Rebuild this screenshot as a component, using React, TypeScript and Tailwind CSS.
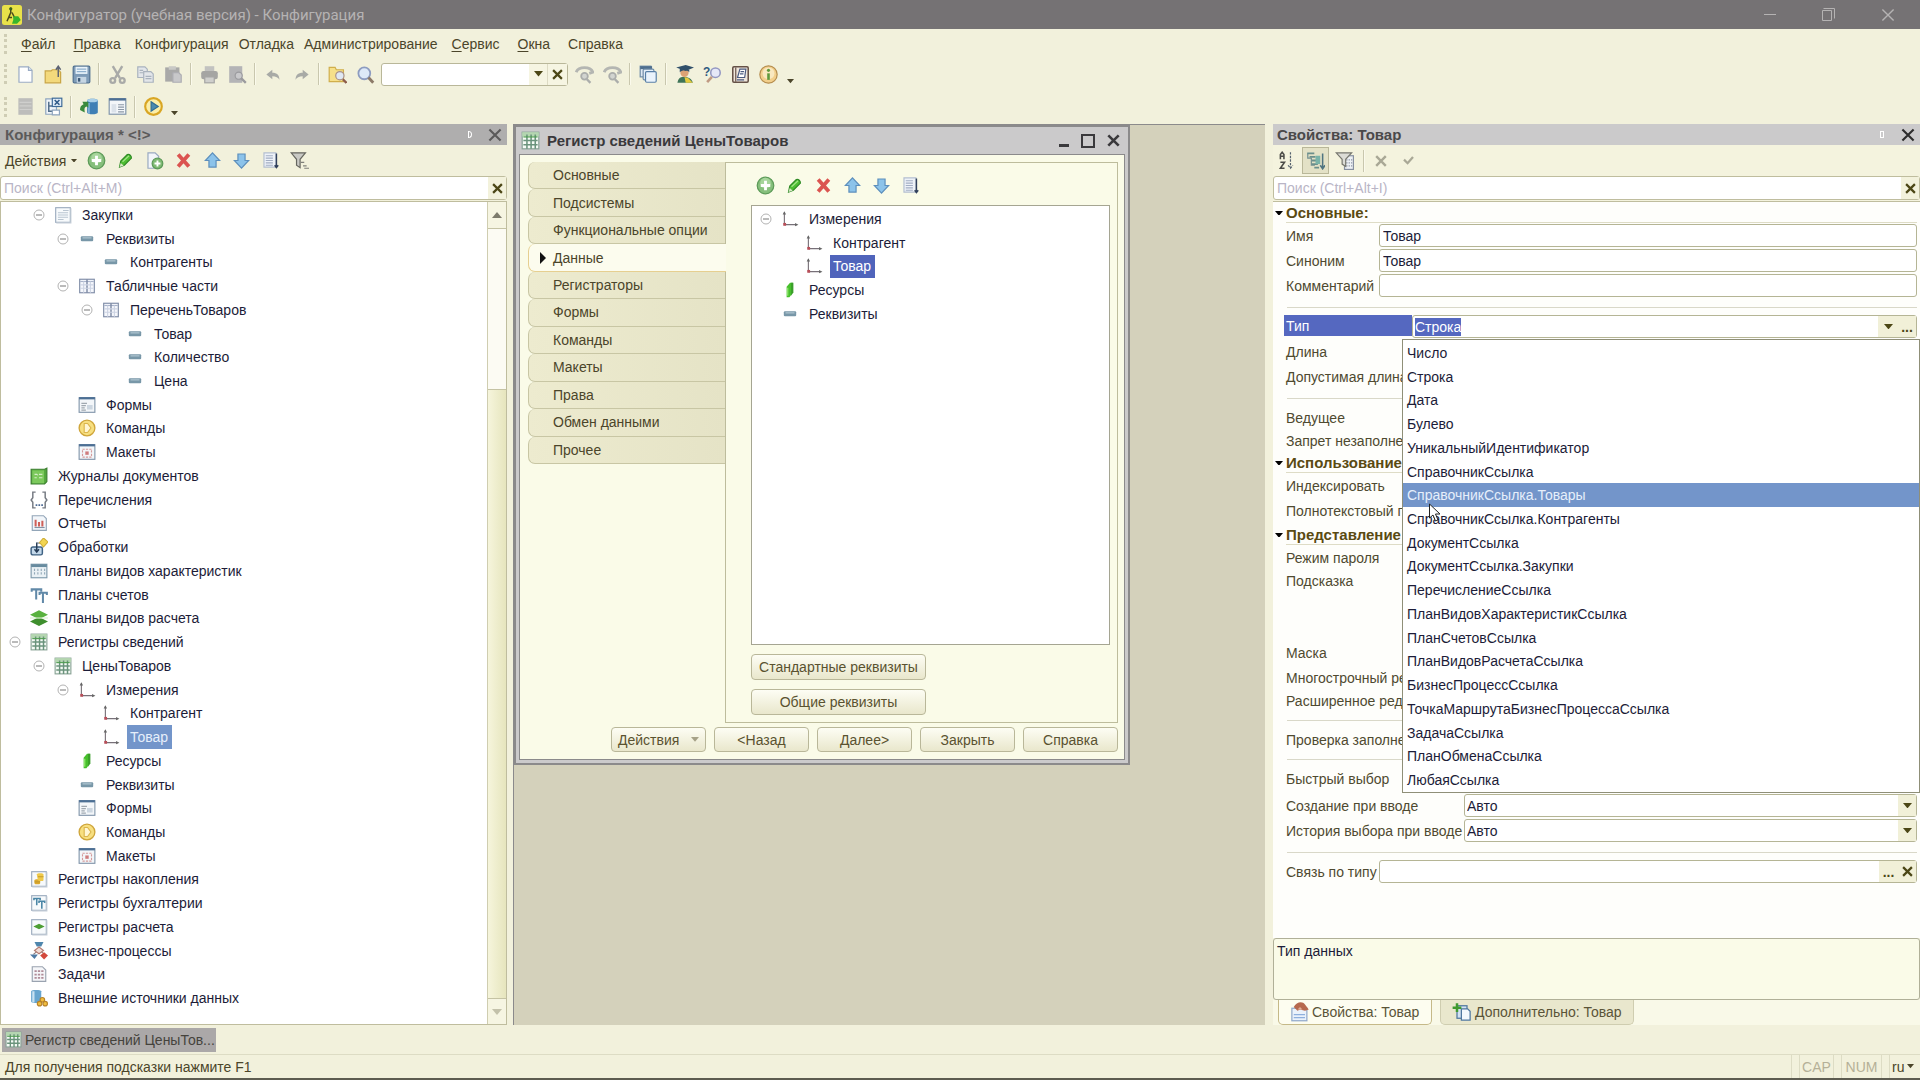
import { useState, type ReactNode } from 'react';
import clsx from 'clsx';

type IconName = keyof typeof ICONS;

interface TreeItem {
  level: number;
  icon: IconName;
  label: string;
  open?: boolean;
  selected?: boolean;
}

const sheet = (
  <>
    <rect x="1.5" y="1.5" width="13" height="13" fill="#f7fafc" stroke="#9aaabd" />
    <path d="M2 15h13V2" fill="none" stroke="#c3ccd6" />
  </>
);

const windowFrame = (
  <>
    <rect x="1" y="1.5" width="14" height="13" fill="#f3f6f9" stroke="#8296ab" />
    <rect x="1" y="1" width="14" height="2" fill="#4c6f94" />
  </>
);

const ICONS = {
  logo: (
    <>
      <rect x="0" y="0" width="16" height="16" rx="2" fill="#e9e14a" />
      <path d="M7 2v4L4 13M8 6l4 8M5 10h3" fill="none" stroke="#4c4a1c" strokeWidth="1.2" />
      <circle cx="7" cy="3" r="1.3" fill="#39601e" />
      <path d="M9 9h4l2 3-3 3H8l1-3z" fill="#38b52c" />
    </>
  ),
  newFile: (
    <>
      <path d="M2.5 1.5h8l3 3v10h-11z" fill="#fff" stroke="#9aabc4" />
      <path d="M10.5 1.5v3h3" fill="#dfe8f3" stroke="#9aabc4" />
    </>
  ),
  openFile: (
    <>
      <path d="M1 5h5l1-1h5l2 2v9H1z" fill="#f3d97c" stroke="#c9a545" />
      <path d="M12 10V1.5M10 4l2-3 2 3" fill="none" stroke="#5c6273" strokeWidth="1.2" />
    </>
  ),
  save: (
    <>
      <rect x="1" y="1" width="14" height="14" rx="1" fill="#7f9cb8" stroke="#4f6f90" />
      <rect x="3" y="1.5" width="10" height="6" fill="#eaf3fa" />
      <path d="M4 3.5h8M4 5.5h8" stroke="#8fb0cd" />
      <rect x="4" y="10" width="8" height="5" fill="#c5d5e3" />
      <rect x="5" y="11" width="2" height="3" fill="#3d5a78" />
    </>
  ),
  cut: (
    <g fill="none" stroke="#a9aaa8" strokeWidth="2">
      <path d="M4 1l6 10M12 1L6 11" />
      <circle cx="4" cy="13" r="2" />
      <circle cx="12" cy="13" r="2" />
    </g>
  ),
  copy: (
    <g fill="#e3e6ea" stroke="#a9b2bd">
      <path d="M1.5 1.5h6l2 2v7h-8z" />
      <path d="M6.5 5.5h6l2 2v7h-8z" />
      <path d="M8 9.5h5M8 11.5h5M3 4.5h3M3 6.5h3" />
    </g>
  ),
  paste: (
    <>
      <rect x="1" y="2" width="12" height="12" fill="#a9a9a8" />
      <rect x="4" y="1" width="6" height="3" fill="#c9c9c6" />
      <path d="M7.5 6.5h5l2 2v6h-7z" fill="#c8c8ca" stroke="#adadb2" />
    </>
  ),
  print: (
    <>
      <rect x="4" y="1" width="8" height="5" fill="#c2c2c0" />
      <rect x="1" y="5" width="14" height="7" rx="2" fill="#a5a5a3" />
      <rect x="4" y="10" width="8" height="5" fill="#cfcfcc" stroke="#a5a5a3" />
    </>
  ),
  preview: (
    <>
      <rect x="1" y="1" width="11" height="14" fill="#b4b4b6" />
      <circle cx="9" cy="9" r="3" fill="#c9c9cb" stroke="#9b9b9e" />
      <path d="M11 11l4 4" stroke="#9b9b9e" strokeWidth="2" />
    </>
  ),
  undo: <path d="M2 8l5-4v2.500c4 0 6 2 6 6-1-2-3-3-6-3V12z" fill="#a8aaa6" />,
  redo: <path d="M14 8L9 4v2.500c-4 0-6 2-6 6 1-2 3-3 6-3V12z" fill="#a8aaa6" />,
  findFolder: (
    <>
      <path d="M1 2h5l1 2h6v10H1z" fill="#f6e08a" stroke="#d0ae4c" />
      <circle cx="10" cy="9" r="3.5" fill="#dfe8f3" stroke="#a8928c" />
      <path d="M12.500 12l3 3" stroke="#8d5d4c" strokeWidth="2" />
    </>
  ),
  zoom: (
    <>
      <circle cx="7" cy="7" r="5" fill="#dde9f8" stroke="#8d9cc0" strokeWidth="1.5" />
      <path d="M10.500 10.500l4 4.500" stroke="#8c7a68" strokeWidth="2.4" />
    </>
  ),
  searchArc: (
    <>
      <path d="M1 6c2-5 12-5 14 0l-3 1" fill="none" stroke="#b4b6b2" strokeWidth="2.4" />
      <circle cx="8" cy="9.5" r="2.8" fill="#d2d4d0" stroke="#abadab" strokeWidth="1.5" />
      <path d="M10 12l3 3" stroke="#abadab" strokeWidth="2" />
    </>
  ),
  windows: (
    <>
      <rect x="1" y="1" width="9" height="9" fill="#dfe9f4" stroke="#6d8aa6" />
      <rect x="1" y="1" width="10" height="2.5" fill="#4e6e8e" />
      <rect x="3.5" y="3.5" width="9" height="9" rx="1" fill="#e6f0fa" stroke="#6d8aa6" />
      <rect x="5.5" y="5.5" width="9" height="9" rx="1" fill="#eaf3fc" stroke="#587fa6" />
    </>
  ),
  graduate: (
    <>
      <circle cx="8" cy="6.5" r="3.5" fill="#dca275" />
      <path d="M1 2l8-2 7 2-7 3z" fill="#31506a" />
      <path d="M4 3v3c3-2 6-2 8 0V4z" fill="#31506a" />
      <path d="M2 15c1-5 3-5 6-5s6 1 7 5z" fill="#3f7458" />
      <path d="M8 10l3 1 4 4H9z" fill="#e5cb3e" />
    </>
  ),
  helpSearch: (
    <>
      <text x="0" y="9" fontSize="10" fontWeight="bold" fill="#2f5a80" fontFamily="Liberation Sans">?</text>
      <circle cx="10.5" cy="6.5" r="4" fill="#e6e8f8" stroke="#9397c2" strokeWidth="1.3" />
      <path d="M7.500 10l-4 4.500" stroke="#c09a83" strokeWidth="2.2" />
    </>
  ),
  book: (
    <>
      <rect x="1.5" y="1.5" width="13" height="13" rx="1" fill="#efe6dc" stroke="#665248" strokeWidth="1.3" />
      <path d="M4 2v12" stroke="#665248" />
      <path d="M7.500 3.500h5l-1 7h-6z" fill="#fff" stroke="#4c5b80" />
      <path d="M8 5.500h3M7.500 7.500h3M5 12.500h6" stroke="#4c5b80" />
    </>
  ),
  info: (
    <>
      <circle cx="8" cy="8" r="7.3" fill="#f2cf8c" stroke="#b58d4e" />
      <circle cx="8" cy="7" r="5" fill="#f9e8c0" />
      <circle cx="8" cy="4.5" r="1.3" fill="#5f9a3c" />
      <path d="M8 7v5.500" stroke="#5f9a3c" strokeWidth="2.2" />
    </>
  ),
  listGray: (
    <>
      <rect x="2" y="1" width="12" height="14" fill="#bdbdbb" />
      <path d="M3 4.500h10M3 7.500h10M3 10.500h10" stroke="#cfcfcd" />
    </>
  ),
  treeWindow: (
    <>
      <path d="M1.500 1.500h9v13h-9z" fill="#f0f5fa" stroke="#8fa5bd" />
      <path d="M4 4v8h4M4 7.500h4" fill="none" stroke="#54708c" strokeWidth="1.3" />
      <rect x="7" y="1" width="8" height="7" fill="#e2edf8" stroke="#3f6b98" />
      <path d="M9 2.500l4 4M13 2.500l-4 4" stroke="#2f5a88" strokeWidth="1.3" />
      <path d="M7 11h6v4H7z" fill="#fff" stroke="#8fa5bd" />
    </>
  ),
  database: (
    <>
      <path d="M6 3c0-2 9-2 9 0v10c0 2-9 2-9 0z" fill="#3f7fb5" />
      <ellipse cx="10.5" cy="3" rx="4.5" ry="1.5" fill="#a9cfe8" />
      <path d="M7.500 5v9" stroke="#7db1d6" strokeWidth="1.5" />
      <path d="M0 11c0-3 1-4 3-5L2 4h5v5L5.500 8C3 9 4 11 4 13z" fill="#3b8a3c" />
    </>
  ),
  formWindow: (
    <>
      {windowFrame}
      <path d="M3 6h4v7H3z" fill="#dbe2ea" />
      <path d="M8.500 6.500h5M8.500 8.500h5M8.500 10.500h5M8.500 12.500h5" stroke="#8c98a6" />
    </>
  ),
  run: (
    <>
      <circle cx="8" cy="8" r="7" fill="#fbeea8" stroke="#d9a624" strokeWidth="1.8" />
      <path d="M6 4l6 4-6 4z" fill="#4a8ab0" stroke="#2f6c94" />
    </>
  ),
  add: (
    <>
      <circle cx="8" cy="8" r="7" fill="#86bf7c" stroke="#5c9a58" />
      <circle cx="8" cy="6" r="4.5" fill="#a6d59b" />
      <path d="M8 4v8M4 8h8" stroke="#fff" strokeWidth="2.4" />
    </>
  ),
  edit: (
    <>
      <path d="M3 13.500l1-5L9.500 3c2-.5 3.500 1 3.500 3l-6 6z" fill="#4ebd32" stroke="#2f8a25" />
      <path d="M3 13.500l1-3.500 2.500 2.500z" fill="#d9e8c8" />
      <path d="M5.500 9L11 4" stroke="#a2e688" />
    </>
  ),
  addCopy: (
    <>
      <path d="M2.500 1.500h6l3 3v10h-9z" fill="#f2f5fa" stroke="#99a9c0" />
      <circle cx="10.5" cy="10.5" r="4.5" fill="#7fba74" stroke="#5c9a58" />
      <path d="M10.500 8v5M8 10.500h5" stroke="#fff" strokeWidth="1.6" />
    </>
  ),
  remove: <path d="M3.500 3l9 10M12.500 3l-9 10" stroke="#db5450" strokeWidth="3.2" />,
  up: <path d="M8 1.500l6 6.500H11v5.500H5V8H2z" fill="#8cc3ea" stroke="#5d8fbc" />,
  down: <path d="M8 14.500L2 8h3V2.500h6V8h3z" fill="#8cc3ea" stroke="#5d8fbc" />,
  sort: (
    <>
      <path d="M2.500 1.500h10v12h-10z" fill="#eef2f8" stroke="#b4bfd0" />
      <path d="M4 4h6M4 6h6M4 8h6M4 10h6M4 12h6" stroke="#a3aec4" />
      <path d="M13 2v12M11.500 12l1.500 2 1.500-2" fill="none" stroke="#31405c" strokeWidth="1.2" />
    </>
  ),
  filter: (
    <>
      <path d="M1 1.500h12L8.500 7v7l-3-2V7z" fill="#c9c9c4" stroke="#66665f" />
      <path d="M9 9.500h3M11 12.500h3M12 14.500h4" stroke="#80807a" />
    </>
  ),
  document: (
    <>
      {sheet}
      <path d="M8 4h5M3.500 6h9M3.500 8h9M3.500 10h9M3.500 12h5" stroke="#b9c5d1" />
    </>
  ),
  attribute: (
    <>
      <rect x="2.5" y="5.5" width="11" height="4.5" rx="1" fill="#7897a8" />
      <path d="M4 7h8" stroke="#b5cad4" />
    </>
  ),
  tabular: (
    <>
      <rect x="1.5" y="2" width="13" height="12" fill="#f5f7fc" stroke="#7e8ba6" />
      <path d="M2 4h12" stroke="#a9b3ca" />
      <path d="M8 2v12" stroke="#7e8ba6" strokeWidth="1.3" />
      <path d="M2 7h12M2 10h12M5 4v10M11 4v10" stroke="#cdd4e3" />
    </>
  ),
  form: (
    <>
      {windowFrame}
      <path d="M3 6.500h5M3 8.500h4M3 10.500h3M3 12.500h4" stroke="#a0a8b0" />
      <rect x="8" y="8" width="5" height="4" fill="#ccd6e0" />
    </>
  ),
  command: (
    <>
      <circle cx="8" cy="8" r="7" fill="#f7df80" stroke="#cfa53a" strokeWidth="1.2" />
      <path d="M5.500 4h3l3 4-3 4h-3z" fill="#fff6d4" stroke="#dbb64e" />
    </>
  ),
  template: (
    <>
      {windowFrame}
      <path d="M4 5.500h8v7H4z" fill="none" stroke="#d59a9a" strokeDasharray="2 1" />
      <rect x="6.5" y="7.5" width="3" height="3" fill="#cf7c7d" />
    </>
  ),
  journal: (
    <>
      <path d="M1 2h12l2-1v12l-2 2H1z" fill="#53a83c" stroke="#3c7f30" />
      <rect x="2" y="3" width="10.5" height="11.5" fill="#7cc95c" />
      <path d="M4 6.500h2l1 1M8 6.500h3M4 9.500h2M8 9.500h3" stroke="#d5f0c5" />
    </>
  ),
  enumeration: (
    <>
      <path d="M5 1H2.500v5L1 8l1.500 2v5H5M11 1h2.500v5L15 8l-1.500 2v5H11" fill="none" stroke="#757a82" strokeWidth="1.3" />
      <path d="M5 12.500h1.500M7.500 12.500h1.500M10 12.500h1.500" stroke="#4c6a94" strokeWidth="1.5" />
    </>
  ),
  report: (
    <>
      <path d="M2 1.500h10l2.500 2.500v10.500H2z" fill="#f2f6fa" stroke="#92a5b8" />
      <path d="M5 11V5M8 11V7M11 11V6" stroke="#cf5f58" strokeWidth="1.8" />
      <path d="M4 12h9" stroke="#8291a3" />
    </>
  ),
  processing: (
    <>
      <rect x="1" y="8" width="10" height="7" rx="1.5" fill="#c3d8ea" stroke="#3f6283" strokeWidth="1.3" />
      <path d="M6 4v8M4 10l2 2.500L8 10" fill="none" stroke="#263d58" strokeWidth="1.3" />
      <path d="M6 4.500h3" stroke="#6c7683" />
      <path d="M12 0l4 3.500L12 8 8.500 4z" fill="#f2d552" stroke="#cfae36" />
    </>
  ),
  characteristics: (
    <>
      <rect x="1" y="2" width="14" height="12" fill="#eaf1f5" stroke="#7e9aac" />
      <rect x="1" y="2" width="14" height="2.5" fill="#678b9f" />
      <path d="M4 6v6M7 6v6M10 6v6M13 6v6" stroke="#93a9b8" strokeDasharray="2 1" />
    </>
  ),
  accounts: (
    <g fill="none" stroke="#6189a8" strokeWidth="1.8">
      <path d="M1.500 5V3h8.500v2M5.500 3v9" />
      <path d="M8.500 8V6h6.500v2M11.500 6v9" />
    </g>
  ),
  calculation: (
    <>
      <path d="M8 7l8 4-8 4-8-4z" fill="#3f8f2e" />
      <path d="M8 1l8 4-8 4-8-4z" fill="#59b23f" />
      <path d="M0 8h16" stroke="#d9efd0" />
    </>
  ),
  infoRegister: (
    <>
      <rect x="1" y="1" width="14" height="14" fill="#f5faf5" stroke="#88a295" />
      <rect x="1" y="1" width="14" height="3.5" fill="#b4d6b0" />
      <path d="M2 8h12M2 11.500h12M5 3v12M8.500 3v12M12 3v12" stroke="#6a937c" strokeWidth="1.3" />
      <path d="M2 5h12" stroke="#4f9c50" />
    </>
  ),
  dimension: (
    <>
      <path d="M3 2v11M3 13h11" stroke="#777078" fill="none" />
      <path d="M1.500 4L3 1l1.500 3zM12.500 11.500L15.500 13l-3 1.500z" fill="#666" />
      <rect x="2" y="11.5" width="2.5" height="2.5" fill="#b84e58" />
    </>
  ),
  resource: (
    <>
      <path d="M5 5l3-3.500h2.500v9l-3 4H5z" fill="#47bf2c" />
      <path d="M9 1.500h2v8.500l-2 3z" fill="#3a9d2a" />
      <path d="M6 6v7" stroke="#9aec75" />
    </>
  ),
  accumulation: (
    <>
      {sheet}
      <path d="M4 9c0-1 5-1 5 0v3c0 1-5 1-5 0z" fill="#dca92e" />
      <path d="M6 4c0-1.500 6-1.500 6 0v5c0 1-4 1-5 0z" fill="#efc94a" />
      <path d="M7 6h5M4 10.500h5" stroke="#c39a2c" />
    </>
  ),
  accounting: (
    <>
      {sheet}
      <g fill="none" stroke="#4a86a6" strokeWidth="1.4">
        <path d="M3.500 5.500V4h5.500v1.500M6 4v6" />
        <path d="M8 8V6.500h5V8M10.500 6.500V13" />
      </g>
    </>
  ),
  calcRegister: (
    <>
      {sheet}
      <path d="M8 5l5 2.500L8 10 3 7.500z" fill="#4d9e34" />
    </>
  ),
  process: (
    <>
      <path d="M4 0h8l-2 4H6z" fill="#4f86ad" />
      <path d="M3 11l5-4 5 4" stroke="#8d7a78" fill="none" />
      <path d="M8 4.500l4 3-4 3-4-3z" fill="#f1ddd6" stroke="#b47d74" />
      <path d="M0 11h7l-3 4z" fill="#4f7ba5" />
      <path d="M12.500 9l3.500 3-3.500 3.500L9 12z" fill="#d3493c" />
    </>
  ),
  task: (
    <>
      <path d="M2 1.500h9l3 3v10H2z" fill="#f5f6f9" stroke="#9aa3b0" />
      <path d="M4 5.500h8M4 8.500h8M4 11.500h8" stroke="#b08c98" strokeWidth="1.5" strokeDasharray="2 1" />
    </>
  ),
  external: (
    <>
      <path d="M1 2c0-1.500 9-1.500 9 0v9c0 2-9 2-9 0z" fill="#67a5cf" />
      <path d="M3 2v10" stroke="#c9e2f2" strokeWidth="2" />
      <g fill="#f0bd3e" stroke="#b8832a">
        <circle cx="11" cy="9.5" r="2" />
        <circle cx="8.5" cy="13" r="2" />
        <circle cx="13.5" cy="13" r="2" />
      </g>
    </>
  ),
  sortAz: (
    <>
      <path d="M2 7V3l1.500-2L5 3v4M2 4.500h3M2 9.500h3.500L2 14.500h3.500" fill="none" stroke="#4c4c48" strokeWidth="1.3" />
      <path d="M10.500 1v13M8.500 12l2 2.500 2-2.500" fill="none" stroke="#55626e" strokeDasharray="2 1" />
    </>
  ),
  categories: (
    <>
      <path d="M1 2h6M3 5h5M5 8h5M5 11h5M7 14h4" stroke="#6b8f8b" strokeWidth="1.5" />
      <path d="M1.500 2v4h3v6h3" fill="none" stroke="#718f90" />
      <rect x="8" y="4" width="4" height="7" fill="#79b3a8" />
      <path d="M14 2v12M12 12l2 3 2-3" fill="none" stroke="#4f7480" strokeWidth="1.3" />
    </>
  ),
  filterList: (
    <>
      <rect x="8" y="4" width="7.5" height="11.5" fill="#eef1f5" stroke="#8790a0" />
      <path d="M9.500 7.500h5M9.500 10h5M9.500 12.500h5" stroke="#8a93a3" strokeDasharray="1 1" />
      <path d="M1 1.500h13L9 7v6l-3-2V7z" fill="#dcdcd6" stroke="#77776f" />
    </>
  ),
  properties: (
    <>
      <rect x="1.5" y="5" width="12" height="10" fill="#eaf2fb" stroke="#93aacb" />
      <path d="M3 10h9M3 12.500h9" stroke="#8eb0dd" />
      <path d="M3 4c2-4 7-5 9-2l3 4-3 1-4-1-2 1z" fill="#b6694f" />
      <path d="M6 6l2-2 2 2" fill="#e2ae94" />
    </>
  ),
  additional: (
    <>
      <rect x="4" y="3" width="8" height="10" fill="#d3e2f2" stroke="#4f779f" />
      <path d="M7.500 5.500h5l2 2v7h-7z" fill="#f3f8fd" stroke="#4f779f" />
      <path d="M4 1v7M.5 4.500h7" stroke="#3f9a30" strokeWidth="2" />
    </>
  ),
} satisfies Record<string, ReactNode>;

const TREE: TreeItem[] = [
  { level: 1, icon: 'document', label: 'Закупки', open: true },
  { level: 2, icon: 'attribute', label: 'Реквизиты', open: true },
  { level: 3, icon: 'attribute', label: 'Контрагенты' },
  { level: 2, icon: 'tabular', label: 'Табличные части', open: true },
  { level: 3, icon: 'tabular', label: 'ПереченьТоваров', open: true },
  { level: 4, icon: 'attribute', label: 'Товар' },
  { level: 4, icon: 'attribute', label: 'Количество' },
  { level: 4, icon: 'attribute', label: 'Цена' },
  { level: 2, icon: 'form', label: 'Формы' },
  { level: 2, icon: 'command', label: 'Команды' },
  { level: 2, icon: 'template', label: 'Макеты' },
  { level: 0, icon: 'journal', label: 'Журналы документов' },
  { level: 0, icon: 'enumeration', label: 'Перечисления' },
  { level: 0, icon: 'report', label: 'Отчеты' },
  { level: 0, icon: 'processing', label: 'Обработки' },
  { level: 0, icon: 'characteristics', label: 'Планы видов характеристик' },
  { level: 0, icon: 'accounts', label: 'Планы счетов' },
  { level: 0, icon: 'calculation', label: 'Планы видов расчета' },
  { level: 0, icon: 'infoRegister', label: 'Регистры сведений', open: true },
  { level: 1, icon: 'infoRegister', label: 'ЦеныТоваров', open: true },
  { level: 2, icon: 'dimension', label: 'Измерения', open: true },
  { level: 3, icon: 'dimension', label: 'Контрагент' },
  { level: 3, icon: 'dimension', label: 'Товар', selected: true },
  { level: 2, icon: 'resource', label: 'Ресурсы' },
  { level: 2, icon: 'attribute', label: 'Реквизиты' },
  { level: 2, icon: 'form', label: 'Формы' },
  { level: 2, icon: 'command', label: 'Команды' },
  { level: 2, icon: 'template', label: 'Макеты' },
  { level: 0, icon: 'accumulation', label: 'Регистры накопления' },
  { level: 0, icon: 'accounting', label: 'Регистры бухгалтерии' },
  { level: 0, icon: 'calcRegister', label: 'Регистры расчета' },
  { level: 0, icon: 'process', label: 'Бизнес-процессы' },
  { level: 0, icon: 'task', label: 'Задачи' },
  { level: 0, icon: 'external', label: 'Внешние источники данных' },
];

const REGISTER_TREE: TreeItem[] = [
  { level: 0, icon: 'dimension', label: 'Измерения', open: true },
  { level: 1, icon: 'dimension', label: 'Контрагент' },
  { level: 1, icon: 'dimension', label: 'Товар', selected: true },
  { level: 0, icon: 'resource', label: 'Ресурсы' },
  { level: 0, icon: 'attribute', label: 'Реквизиты' },
];

// [before, underlined letter, after]
const MENU = [
  ['', 'Ф', 'айл'],
  ['', 'П', 'равка'],
  ['Конфигурация', '', ''],
  ['Отладка', '', ''],
  ['Администрирование', '', ''],
  ['', 'С', 'ервис'],
  ['', 'О', 'кна'],
  ['Сп', 'р', 'авка'],
];

const TABS = [
  'Основные',
  'Подсистемы',
  'Функциональные опции',
  'Данные',
  'Регистраторы',
  'Формы',
  'Команды',
  'Макеты',
  'Права',
  'Обмен данными',
  'Прочее',
];

const TYPES = [
  'Число',
  'Строка',
  'Дата',
  'Булево',
  'УникальныйИдентификатор',
  'СправочникСсылка',
  'СправочникСсылка.Товары',
  'СправочникСсылка.Контрагенты',
  'ДокументСсылка',
  'ДокументСсылка.Закупки',
  'ПеречислениеСсылка',
  'ПланВидовХарактеристикСсылка',
  'ПланСчетовСсылка',
  'ПланВидовРасчетаСсылка',
  'БизнесПроцессСсылка',
  'ТочкаМаршрутаБизнесПроцессаСсылка',
  'ЗадачаСсылка',
  'ПланОбменаСсылка',
  'ЛюбаяСсылка',
];

const BTN = 'rounded-[4px] border border-[#b9b799] bg-linear-to-b from-[#fdfdf4] to-[#e9e7cc] text-[#5a5230]';
const FIELD = 'flex h-[23px] min-w-0 flex-1 rounded-[3px] border border-[#b5b595] bg-white text-[#1c1c38]';

function Icon({ name, className = 'size-[19px]' }: { name: IconName; className?: string }) {
  return (
    <svg viewBox="0 0 16 16" className={clsx('shrink-0', className)} aria-hidden="true">
      {ICONS[name]}
    </svg>
  );
}

function Caret({ className = 'w-[9px]' }: { className?: string }) {
  return (
    <svg viewBox="0 0 10 6" className={clsx('shrink-0', className)} aria-hidden="true">
      <path d="M0 0h10L5 6z" fill="currentColor" />
    </svg>
  );
}

function Cross({ className = 'size-[11px]', width = 2 }: { className?: string; width?: number }) {
  return (
    <svg viewBox="0 0 10 10" className={clsx('shrink-0', className)} aria-hidden="true">
      <path d="M1 1l8 8M9 1L1 9" stroke="currentColor" strokeWidth={width} />
    </svg>
  );
}

function Grip() {
  return <span className="mx-[4px] h-5 w-[3px] border-l-[3px] border-dotted border-[#cfcdb4]" />;
}

function Sep() {
  return <span className="mx-[3px] h-[22px] w-[2px] border-l border-[#c9c7ae] bg-[#fbfaec]" />;
}

function Tools({ names, wide }: { names: IconName[]; wide?: boolean }) {
  return (
    <>
      {names.map((name, i) => (
        <button key={i} aria-label={name} className={clsx('flex h-6 items-center justify-center', wide ? 'w-[29px]' : 'w-[28px]')}>
          <Icon name={name} />
        </button>
      ))}
    </>
  );
}

function TreeRow({ item, accent }: { item: TreeItem; accent: string }) {
  return (
    <li className="flex items-center whitespace-nowrap" style={{ paddingLeft: item.level * 24 + 6 }}>
      <span className="flex w-4 shrink-0 justify-center">
        {item.open && (
          <svg viewBox="0 0 12 12" className="size-[12px]" aria-hidden="true">
            <circle cx="6" cy="6" r="5" fill="#fff" stroke="#b3b3b3" />
            <path d="M3 6h6" stroke="#777" />
          </svg>
        )}
      </span>
      <span className="flex w-8 shrink-0 justify-center">
        <Icon name={item.icon} className="size-[18px]" />
      </span>
      <span className={clsx('flex h-full items-center pl-[3px] pr-[4px]', item.selected && accent)}>{item.label}</span>
    </li>
  );
}

function SearchBox({ placeholder }: { placeholder: string }) {
  return (
    <div className="flex h-6 rounded-[3px] border border-[#bfbd9e] bg-white">
      <input
        aria-label={placeholder}
        placeholder={placeholder}
        className="min-w-0 flex-1 px-[3px] outline-none placeholder:text-[#b9b5c6]"
      />
      <button aria-label="Очистить" className="flex w-[18px] items-center justify-center bg-[#f3f2dc] text-[#4c4716]">
        <Cross />
      </button>
    </div>
  );
}

function Section({ title }: { title: string }) {
  return (
    <div className="flex h-[22px] items-center">
      <span className="flex w-[11px] text-black">
        <Caret className="w-[8px]" />
      </span>
      <h3 className="flex h-5 flex-1 items-center border-b border-[#dedcc6] text-[15px] font-bold text-[#5a4a12]">{title}</h3>
    </div>
  );
}

function Divider() {
  return (
    <div className="flex h-4 items-center pl-[12px]">
      <span className="h-px flex-1 bg-[#d9d8c8]" />
    </div>
  );
}

function TextRow({ id, label, value = '', children }: { id: string; label: string; value?: string; children?: ReactNode }) {
  return (
    <div className="mb-[2px] flex h-[23px] items-center">
      <label htmlFor={id} className="w-[104px] shrink-0 pl-[11px] whitespace-nowrap">
        {label}
      </label>
      <div className={FIELD}>
        <input id={id} defaultValue={value} className="min-w-0 flex-1 px-[3px] outline-none" />
        {children}
      </div>
    </div>
  );
}

function SelectRow({ id, label }: { id: string; label: string }) {
  return (
    <div className="mb-[2px] flex h-[23px] items-center">
      <label htmlFor={id} className="w-[189px] shrink-0 pl-[11px] whitespace-nowrap">
        {label}
      </label>
      <div className={FIELD}>
        <select id={id} className="min-w-0 flex-1 appearance-none px-[2px] outline-none">
          <option>Авто</option>
        </select>
        <span className="flex w-[18px] items-center justify-center bg-[#f1f0d8] text-[#4c4716]">
          <Caret />
        </span>
      </div>
    </div>
  );
}

// the value controls of these rows lie under the opened type list
function LabelRow({ label, className = 'h-[23px]' }: { label: string; className?: string }) {
  return (
    <div className={className}>
      <p className="flex h-[23px] items-center pl-[11px] whitespace-nowrap">{label}</p>
    </div>
  );
}

function TypeList({ value, onSelect }: { value: string; onSelect: (type: string) => void }) {
  return (
    <div className="absolute top-[24px] right-[-3px] left-[127px] z-10 h-[454px] border border-[#8f8f78] bg-white text-[#1c1c38]">
      <ul role="listbox" aria-label="Тип" className="grid h-full auto-rows-fr pt-px">
        {TYPES.map((type) => (
          <li
            key={type}
            role="option"
            aria-selected={type === value}
            onClick={() => onSelect(type)}
            className={clsx('flex items-center pl-[4px]', type === value && 'bg-[#7395ca] text-[#e6effb]')}
          >
            {type}
          </li>
        ))}
      </ul>
      <svg viewBox="0 0 12 19" className="absolute top-[163px] left-[26px] h-[19px] w-[12px]" aria-hidden="true">
        <path d="M.5 1v14l3.500-3 2.500 6 2.500-1-2.500-6H11z" fill="#fff" stroke="#222" />
      </svg>
    </div>
  );
}

function ConfigurationPanel() {
  return (
    <aside className="flex w-[507px] shrink-0 flex-col">
      <header className="flex h-[21px] items-center bg-[#afaeae] pl-[5px] font-bold text-[#5b5a5a]">
        <h2 className="flex-1 text-[15px]">Конфигурация * &lt;!&gt;</h2>
        <span className="mr-[16px] h-[7px] w-[4px] rounded-r-sm border border-white" />
        <button aria-label="Закрыть панель" className="mr-[5px]">
          <Cross className="size-[14px]" width={1.5} />
        </button>
      </header>
      <div className="flex h-[31px] items-center pl-[5px]">
        <button className="flex w-[77px] items-center gap-[5px]">
          Действия
          <Caret className="w-[6px]" />
        </button>
        <Tools wide names={['add', 'edit', 'addCopy', 'remove', 'up', 'down', 'sort', 'filter']} />
      </div>
      <SearchBox placeholder="Поиск (Ctrl+Alt+M)" />
      <div className="mt-px flex min-h-0 flex-1 border border-[#bfbd9e] bg-white">
        <ul className="grid flex-1 auto-rows-fr pt-px pb-[14px] text-[#1c1c38]">
          {TREE.map((item, i) => (
            <TreeRow key={i} item={item} accent="bg-[#7395ca] text-[#e6effb]" />
          ))}
        </ul>
        <div className="flex w-[19px] flex-col border-l border-[#cfcdb0] bg-linear-to-r from-[#f6f5dc] to-[#e6e5bd]">
          <button aria-label="Вверх" className="flex h-[27px] items-center justify-center border-b border-[#c5c3a4] bg-[#f6f5e2] text-[#7d7b6c]">
            <Caret className="w-[10px] rotate-180" />
          </button>
          <div className="h-[161px] border-b border-[#c5c3a4] bg-[#fcfbf3]" />
          <div className="flex-1" />
          <button aria-label="Вниз" className="flex h-[26px] items-center justify-center border-t border-[#c5c3a4] bg-[#f6f5e2] text-[#c3c1aa]">
            <Caret className="w-[10px]" />
          </button>
        </div>
      </div>
    </aside>
  );
}

function RegisterWindow() {
  const [tab, setTab] = useState('Данные');
  return (
    <section className="flex h-[640px] w-[616px] flex-col border-2 border-[#8b8a8b] bg-[#cbcacb] px-[3px] pb-[3px]">
      <header className="flex h-[27px] items-center gap-[7px] pr-[5px] pl-[2px] text-[#3a393c]">
        <Icon name="infoRegister" />
        <h2 className="flex-1 text-[15px] font-bold">Регистр сведений ЦеныТоваров</h2>
        <button aria-label="Свернуть" className="mt-[10px] h-[3px] w-[10px] bg-[#3a393c]" />
        <button aria-label="Развернуть" className="ml-[5px] size-[14px] border-2 border-[#3a393c]" />
        <button aria-label="Закрыть" className="ml-[5px]">
          <Cross className="size-[13px]" />
        </button>
      </header>
      <div className="flex min-h-0 flex-1 flex-col border border-[#8b8a8b] bg-[#fafbe8] pt-[7px] pr-[6px] pb-[7px] pl-[8px]">
        <div className="flex min-h-0 flex-1">
          <div role="tablist" className="grid h-[302px] w-[198px] shrink-0 auto-rows-fr text-[#4b452a]">
            {TABS.map((name) => (
              <button
                key={name}
                role="tab"
                aria-selected={name === tab}
                onClick={() => setTab(name)}
                className={clsx(
                  'relative z-10 flex items-center rounded-l-[7px] border-b border-l pl-[8px]',
                  name === tab ? 'border-[#e6cf90] bg-[#fcfcee]' : 'mr-px border-[#c8c6a4] bg-linear-to-r from-[#edebcf] to-[#e5e3c6]',
                )}
              >
                <span className="flex w-4 pl-[3px]">
                  {name === tab && (
                    <svg viewBox="0 0 6 12" className="h-[12px] w-[6px]" aria-hidden="true">
                      <path d="M0 0l6 6-6 6z" fill="#111" />
                    </svg>
                  )}
                </span>
                {name}
              </button>
            ))}
          </div>
          <div className="-ml-px flex min-w-0 flex-1 flex-col border border-[#bdbc9c] pt-[8px] pr-[7px] pb-[7px] pl-[25px]">
            <div className="flex h-[28px] items-center">
              <Tools wide names={['add', 'edit', 'remove', 'up', 'down', 'sort']} />
            </div>
            <div className="mt-[6px] min-h-0 flex-1 border border-[#a5a592] bg-white text-[#1c1c38]">
              <ul className="grid h-[120px] auto-rows-fr pt-px">
                {REGISTER_TREE.map((item) => (
                  <TreeRow key={item.label} item={item} accent="bg-[#5064bb] text-white" />
                ))}
              </ul>
            </div>
            <div className="mt-[9px] flex w-[175px] flex-col gap-[9px]">
              <button className={clsx(BTN, 'h-[26px]')}>Стандартные реквизиты</button>
              <button className={clsx(BTN, 'h-[26px]')}>Общие реквизиты</button>
            </div>
          </div>
        </div>
        <footer className="mt-[4px] flex justify-end gap-[8px]">
          <button className={clsx(BTN, 'flex h-[25px] w-[95px] items-center justify-between px-[6px]')}>
            Действия
            <Caret className="w-[8px] opacity-50" />
          </button>
          {['<Назад', 'Далее>', 'Закрыть', 'Справка'].map((label) => (
            <button key={label} className={clsx(BTN, 'h-[25px] w-[95px]')}>
              {label}
            </button>
          ))}
        </footer>
      </div>
    </section>
  );
}

function PropertiesPanel() {
  const [type, setType] = useState('СправочникСсылка.Товары');
  return (
    <aside className="flex w-[647px] shrink-0 flex-col bg-[#f4f3de]">
      <header className="flex h-[21px] items-center bg-[#cbcacb] pl-[4px] font-bold text-[#4a494a]">
        <h2 className="flex-1 text-[15px]">Свойства: Товар</h2>
        <span className="mr-[17px] h-[7px] w-[4px] border border-white" />
        <button aria-label="Закрыть панель" className="mr-[5px] text-[#2d2d2d]">
          <Cross className="size-[14px]" width={1.5} />
        </button>
      </header>
      <div className="flex h-[31px] items-center text-[#a9a896]">
        <button aria-label="По алфавиту" className="flex w-[29px] justify-center">
          <Icon name="sortAz" />
        </button>
        <button aria-label="По категориям" className="flex size-[27px] items-center justify-center border border-[#b9b799] bg-[#e3e1c6]">
          <Icon name="categories" />
        </button>
        <button aria-label="Отбор" className="flex w-[31px] justify-center">
          <Icon name="filterList" />
        </button>
        <Sep />
        <button aria-label="Отменить" className="ml-[4px] flex w-[18px] justify-center">
          <Cross className="size-[12px]" />
        </button>
        <button aria-label="Применить" className="ml-[13px]">
          <svg viewBox="0 0 12 10" className="h-[9px] w-[11px]" aria-hidden="true">
            <path d="M1 4l4 4 6-7" fill="none" stroke="currentColor" strokeWidth="2.5" />
          </svg>
        </button>
      </div>
      <SearchBox placeholder="Поиск (Ctrl+Alt+I)" />
      <div className="mt-px min-h-0 flex-1 border-t border-[#bfbd9e] bg-[#fefefb] pr-[3px] pl-[2px] text-[#4f4a30]">
        <Section title="Основные:" />
        <TextRow id="name" label="Имя" value="Товар" />
        <TextRow id="synonym" label="Синоним" value="Товар" />
        <TextRow id="comment" label="Комментарий" />
        <Divider />
        <div className="relative mb-[2px] flex h-[23px]">
          <label htmlFor="type" className="ml-[9px] flex h-[21px] w-[128px] items-center bg-[#5568c0] pl-[2px] text-white">
            Тип
          </label>
          <div className={clsx(FIELD, 'items-center')}>
            <div className="flex-1">
              <input id="type" defaultValue="Строка" className="ml-[2px] block h-[18px] w-[46px] bg-[#5568c0] text-white outline-none" />
            </div>
            <button aria-label="Открыть список" className="flex h-full w-[20px] items-center justify-center bg-[#f1f0d8] text-[#4c4716]">
              <Caret />
            </button>
            <button aria-label="Выбрать" className="h-full w-[18px] bg-[#f1f0d8] font-bold text-[#4c4716]">...</button>
          </div>
          <TypeList value={type} onSelect={setType} />
        </div>
        <LabelRow label="Длина" className="h-[25px]" />
        <LabelRow label="Допустимая длина" className="h-[25px]" />
        <Divider />
        <LabelRow label="Ведущее" />
        <LabelRow label="Запрет незаполне" />
        <Section title="Использование" />
        <LabelRow label="Индексировать" className="h-[25px]" />
        <LabelRow label="Полнотекстовый п" className="h-[25px]" />
        <Section title="Представление" />
        <LabelRow label="Режим пароля" />
        <LabelRow label="Подсказка" className="h-[72px]" />
        <LabelRow label="Маска" className="h-[25px]" />
        <LabelRow label="Многострочный ре" />
        <LabelRow label="Расширенное реда" />
        <Divider />
        <LabelRow label="Проверка заполне" />
        <Divider />
        <LabelRow label="Быстрый выбор" className="h-[27px]" />
        <SelectRow id="create" label="Создание при вводе" />
        <SelectRow id="history" label="История выбора при вводе" />
        <Divider />
        <TextRow id="link" label="Связь по типу">
          <button aria-label="Выбрать связь" className="w-[19px] bg-[#f1f0d8] font-bold text-[#4c4716]">...</button>
          <button aria-label="Очистить связь" className="flex w-[18px] items-center justify-center bg-[#f1f0d8] text-[#4c4716]">
            <Cross />
          </button>
        </TextRow>
      </div>
      <p className="h-[62px] shrink-0 rounded-[3px] border border-[#b0b098] bg-[#fafbe8] px-[3px] pt-[3px] text-[#1c1c38]">Тип данных</p>
      <div role="tablist" className="flex h-[25px] shrink-0 gap-[8px] bg-[#f9f9e8] pl-[5px] text-[#5a5438]">
        <button role="tab" aria-selected="true" className="flex w-[154px] items-center gap-[2px] rounded-b-[5px] border border-t-0 border-[#c5b988] bg-[#fdfdf0] pl-[11px]">
          <Icon name="properties" className="size-[20px]" />
          Свойства: Товар
        </button>
        <button role="tab" aria-selected="false" className="flex w-[194px] items-center gap-[3px] rounded-b-[5px] border border-t-0 border-[#cfcdb0] bg-[#e9e7cd] pl-[11px]">
          <Icon name="additional" className="size-[20px]" />
          Дополнительно: Товар
        </button>
      </div>
    </aside>
  );
}

export default function App() {
  return (
    <div className="flex h-screen flex-col overflow-hidden border-b-2 border-[#5d5c50] bg-[#f2f1dc] font-['Liberation_Sans',Arial,sans-serif] text-[14px] leading-[18px] text-[#4b452a]">
      <header className="flex h-[29px] shrink-0 items-center bg-[#757274] pl-[2px] text-[#b5b3b3]">
        <Icon name="logo" className="size-[20px]" />
        <h1 className="ml-[5px] flex-1 font-['Roboto',sans-serif] text-[15px]">Конфигуратор (учебная версия) - Конфигурация</h1>
        <button aria-label="Свернуть" className="mr-[46px] h-px w-[12px] bg-[#b5b3b3]" />
        <button aria-label="Восстановить" className="mr-[46px]">
          <svg viewBox="0 0 13 13" className="size-[13px]" fill="none" stroke="currentColor" aria-hidden="true">
            <path d="M.5 2.500h9v10h-9zM1.500.5h11v10" />
          </svg>
        </button>
        <button aria-label="Закрыть" className="mr-[25px]">
          <Cross className="size-[14px]" width={1} />
        </button>
      </header>

      <nav className="flex h-[30px] shrink-0 items-center">
        <Grip />
        <div className="flex pl-px">
          {MENU.map(([before, key, after]) => (
            <button key={before + after} className={key ? 'px-[9px]' : 'px-[5px]'}>
              {before}
              <u className="underline-offset-2">{key}</u>
              {after}
            </button>
          ))}
        </div>
      </nav>

      <div className="flex h-[30px] shrink-0 items-center">
        <Grip />
        <Tools names={['newFile', 'openFile', 'save']} />
        <Sep />
        <Tools names={['cut', 'copy', 'paste']} />
        <Sep />
        <Tools names={['print', 'preview']} />
        <Sep />
        <Tools names={['undo', 'redo']} />
        <Sep />
        <Tools names={['findFolder', 'zoom']} />
        <div className="mx-[2px] flex h-[23px] w-[187px] rounded-[3px] border border-[#b9b799] bg-white text-[#4c4716]">
          <input aria-label="Строка поиска" className="min-w-0 flex-1 px-1 outline-none" />
          <button aria-label="Список поиска" className="flex w-[19px] items-center justify-center border-r border-[#dddbc4] bg-[#f6f5e2]">
            <Caret />
          </button>
          <button aria-label="Очистить поиск" className="flex w-[19px] items-center justify-center bg-[#f6f5e2]">
            <Cross />
          </button>
        </div>
        <Tools names={['searchArc', 'searchArc']} />
        <Sep />
        <Tools names={['windows']} />
        <Sep />
        <Tools names={['graduate', 'helpSearch', 'book', 'info']} />
        <span className="mt-[15px] ml-[5px] flex">
          <Caret className="w-[7px]" />
        </span>
      </div>

      <div className="flex h-[35px] shrink-0 items-center">
        <Grip />
        <Tools names={['listGray', 'treeWindow']} />
        <Sep />
        <Tools names={['database', 'formWindow']} />
        <Sep />
        <Tools names={['run']} />
        <span className="mt-[13px] ml-[4px] flex">
          <Caret className="w-[7px]" />
        </span>
      </div>

      <main className="flex min-h-0 flex-1">
        <ConfigurationPanel />
        <div className="mr-[8px] ml-[6px] min-w-0 flex-1 border-t border-l border-[#8b8a8b] bg-[#d4d1bb]">
          <RegisterWindow />
        </div>
        <PropertiesPanel />
      </main>

      <div className="flex h-[29px] shrink-0 items-center pl-[2px]">
        <button className="flex h-[24px] w-[214px] items-center gap-[3px] bg-[#aba8a8] pl-[3px] whitespace-nowrap text-[#45433c]">
          <Icon name="infoRegister" className="size-[17px]" />
          Регистр сведений ЦеныТов...
        </button>
      </div>

      <footer className="flex h-[24px] shrink-0 items-center gap-[7px] border-t border-[#dddcc4]">
        <span className="flex h-full flex-1 items-center border-r border-[#dddcc4] pl-[5px]">Для получения подсказки нажмите F1</span>
        <span className="flex h-full w-[35px] items-center justify-center border-x border-[#dddcc4] text-[#b5b097]">CAP</span>
        <span className="flex h-full w-[41px] items-center justify-center border-x border-[#dddcc4] text-[#b5b097]">NUM</span>
        <button className="flex h-full w-[31px] items-center gap-[3px] border-l border-[#dddcc4] pl-[2px]">
          ru
          <Caret className="w-[7px]" />
        </button>
      </footer>
    </div>
  );
}
